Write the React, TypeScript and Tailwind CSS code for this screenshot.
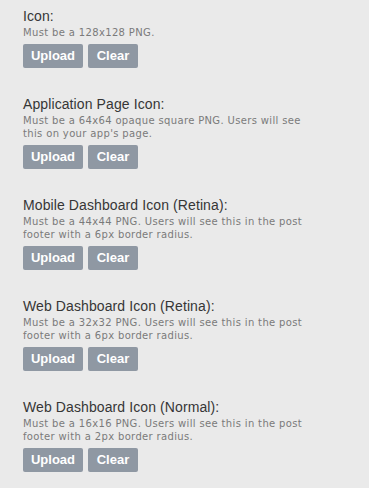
import React from "react";

const items = [
  { title: "Icon:", desc: "Must be a 128x128 PNG." },
  {
    title: "Application Page Icon:",
    desc: "Must be a 64x64 opaque square PNG. Users will see this on your app's page.",
  },
  {
    title: "Mobile Dashboard Icon (Retina):",
    desc: "Must be a 44x44 PNG. Users will see this in the post footer with a 6px border radius.",
  },
  {
    title: "Web Dashboard Icon (Retina):",
    desc: "Must be a 32x32 PNG. Users will see this in the post footer with a 6px border radius.",
  },
  {
    title: "Web Dashboard Icon (Normal):",
    desc: "Must be a 16x16 PNG. Users will see this in the post footer with a 2px border radius.",
  },
];

export default function App() {
  return (
    <div className="w-[369px] h-[488px] bg-[#eaeaea] pl-[23px] pt-2 overflow-hidden">
      <div className="flex flex-col gap-[28px]">
        {items.map((it) => (
          <div key={it.title} className="flex flex-col">
            <div className="text-[14px] leading-[16px] text-[#363636] tracking-[0.1px] font-['Liberation_Sans',Arial,sans-serif]">
              {it.title}
            </div>
            <div className="mt-[2px] w-[290px] text-[10px] leading-[13px] tracking-[0.35px] text-[#7a7a7a] font-['DejaVu_Sans',Verdana,sans-serif]">
              {it.desc}
            </div>
            <div className="mt-[5px] flex gap-[5px]">
              <button className="h-[24px] w-[60px] rounded-[2px] bg-[#8f98a3] text-white text-[13px] font-bold font-['Liberation_Sans',Arial,sans-serif]">
                Upload
              </button>
              <button className="h-[24px] w-[50px] rounded-[2px] bg-[#8f98a3] text-white text-[13px] font-bold font-['Liberation_Sans',Arial,sans-serif]">
                Clear
              </button>
            </div>
          </div>
        ))}
      </div>
    </div>
  );
}
